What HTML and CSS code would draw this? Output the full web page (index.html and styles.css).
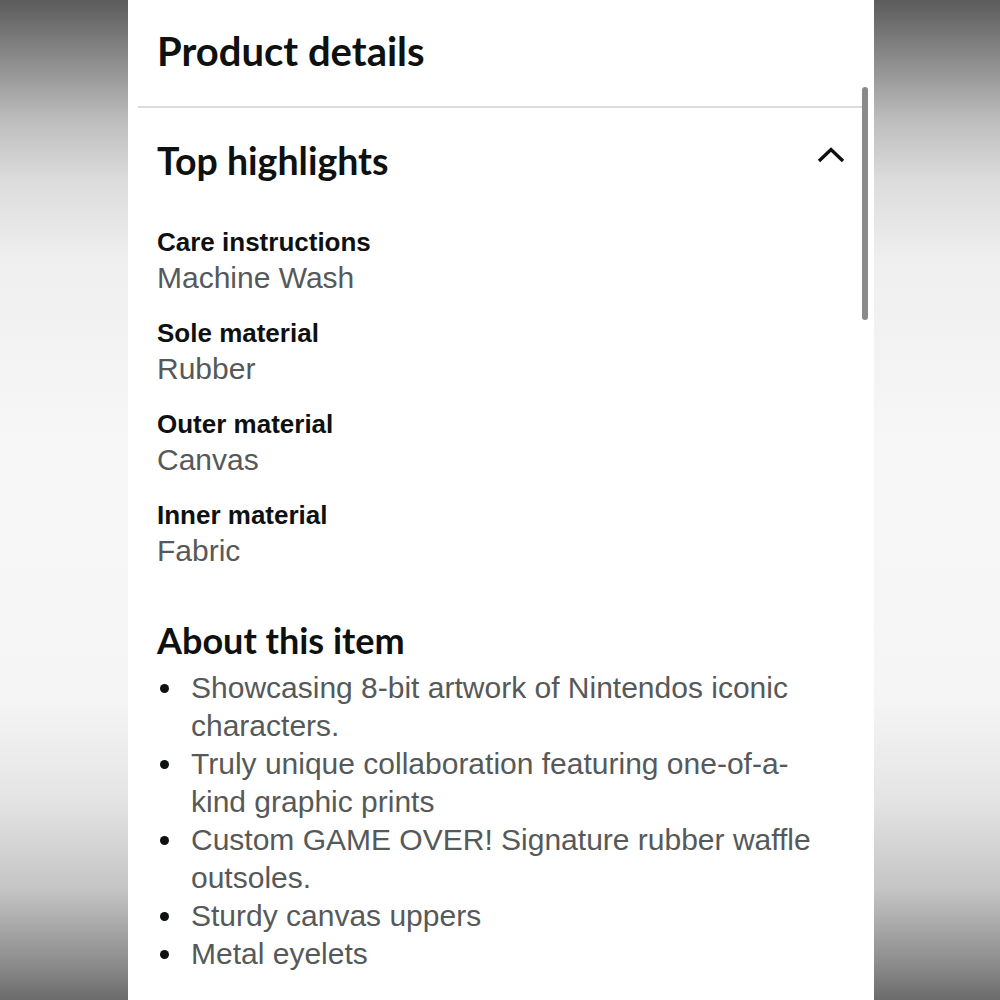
FILE: index.html
```html
<!DOCTYPE html>
<html lang="en">
<head>
<meta charset="utf-8">
<title>Product details</title>
<link rel="stylesheet" href="styles.css">
</head>
<body>
<main class="sheet">
  <header class="sheet-header">
    <h1 class="sheet-title">Product details</h1>
  </header>
  <hr class="divider">

  <section class="highlights">
    <div class="section-head">
      <h2 class="section-title">Top highlights</h2>
      <button class="collapse" type="button" aria-label="Collapse">
        <svg viewBox="0 0 28 16" width="28" height="16" aria-hidden="true">
          <polyline points="2,14 14,2.5 26,14" fill="none" stroke="#0f1111" stroke-width="3.4" stroke-linecap="butt" stroke-linejoin="miter"/>
        </svg>
      </button>
    </div>

    <dl class="specs">
      <div class="spec">
        <dt>Care instructions</dt>
        <dd>Machine Wash</dd>
      </div>
      <div class="spec">
        <dt>Sole material</dt>
        <dd>Rubber</dd>
      </div>
      <div class="spec">
        <dt>Outer material</dt>
        <dd>Canvas</dd>
      </div>
      <div class="spec">
        <dt>Inner material</dt>
        <dd>Fabric</dd>
      </div>
    </dl>

    <h3 class="about-title">About this item</h3>
    <ul class="about-list">
      <li>Showcasing 8-bit artwork of Nintendos iconic characters.</li>
      <li>Truly unique collaboration featuring one-of-a-kind graphic prints</li>
      <li>Custom GAME OVER! Signature rubber waffle outsoles.</li>
      <li>Sturdy canvas uppers</li>
      <li>Metal eyelets</li>
    </ul>
  </section>

  <div class="scroll-thumb" aria-hidden="true"></div>
</main>
</body>
</html>
```

FILE: styles.css
```css
html, body {
  margin: 0;
  padding: 0;
  height: 100%;
}

body {
  background: linear-gradient(
    to bottom,
    #5b5b5b 0%,
    #8c8c8c 6%,
    #bdbdbd 12%,
    #dcdcdc 18%,
    #efefef 26%,
    #f7f7f7 45%,
    #f5f5f5 70%,
    #e4e4e4 80%,
    #c4c4c4 89%,
    #8f8f8f 96%,
    #6b6b6b 100%
  );
  font-family: "Liberation Sans", Arial, sans-serif;
  color: #0f1111;
}

.sheet {
  position: relative;
  width: 746px;
  height: 1000px;
  margin-left: 128px;
  background: #ffffff;
  overflow: hidden;
}

/* Header */
.sheet-header {
  height: 106px;
  display: flex;
  align-items: center;
  padding-left: 29px;
  box-sizing: border-box;
}

.sheet-title,
.section-title,
.about-title {
  font-family: Lato, "Noto Sans", sans-serif;
  font-weight: 700;
  color: #0f1111;
  margin: 0;
}

.sheet-title {
  font-size: 40px;
  line-height: 46px;
  margin-bottom: 4px;
}

.divider {
  margin: 0 12px 0 10px;
  border: 0;
  border-top: 2px solid #dcdcdc;
}

/* Top highlights */
.highlights {
  padding: 0 29px 0 29px;
}

.section-head {
  display: flex;
  align-items: center;
  justify-content: space-between;
  height: 106px;
}

.section-title {
  font-size: 37.5px;
  line-height: 44px;
}

.collapse {
  border: 0;
  background: none;
  padding: 0;
  margin: 0 0 12px 0;
  width: 28px;
  height: 16px;
  display: flex;
}

.specs {
  margin: 11px 0 0 0;
  display: flex;
  flex-direction: column;
  gap: 19px;
}

.spec dt {
  font-weight: 700;
  font-size: 26px;
  line-height: 34px;
  color: #0f1111;
}

.spec dd {
  margin: 0;
  font-size: 30px;
  line-height: 38px;
  color: #565959;
}

/* About this item */
.about-title {
  font-size: 36px;
  line-height: 42px;
  margin-top: 49px;
}

.about-list {
  list-style: none;
  margin: 8px 0 0 0;
  padding: 0;
  width: 680px;
}

.about-list li {
  display: flex;
  font-size: 30px;
  line-height: 38px;
  color: #565959;
}

.about-list li::before {
  content: "";
  flex: 0 0 9px;
  height: 9px;
  margin: 15px 22px 0 3px;
  border-radius: 50%;
  background: #0f1111;
}

/* Overlay scrollbar */
.scroll-thumb {
  position: absolute;
  left: 734px;
  top: 87px;
  width: 6px;
  height: 233px;
  border-radius: 3px;
  background: #8a8a8a;
}
```
